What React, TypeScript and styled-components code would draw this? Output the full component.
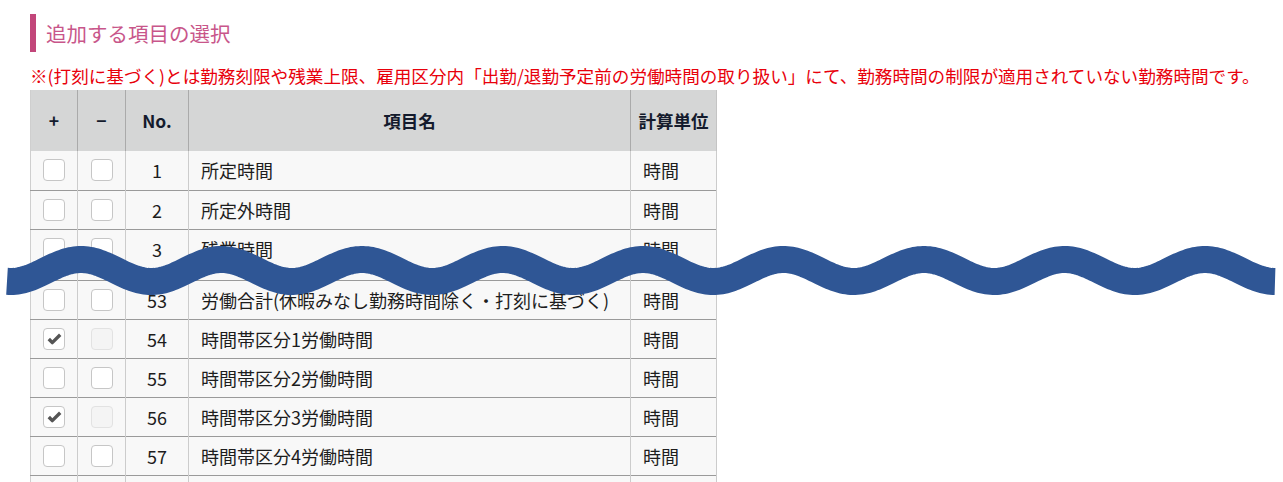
import React from "react";
import styled, { createGlobalStyle } from "styled-components";

const GlobalStyle = createGlobalStyle`
  html, body {
    margin: 0;
    padding: 0;
    background: #ffffff;
  }
  body {
    font-family: "Noto Sans CJK JP", "Noto Sans", sans-serif;
    color: #222;
    overflow: hidden;
  }
`;

const Page = styled.div`
  position: relative;
  padding: 14px 0 0 30px;
`;

const Heading = styled.h2`
  margin: 0;
  height: 38px;
  border-left: 6px solid #c2467a;
  padding-left: 10px;
  font-size: 20.5px;
  line-height: 38px;
  font-weight: 400;
  color: #c8568a;
`;

const Note = styled.p`
  margin: 12px 0 2px;
  font-size: 17.6px;
  line-height: 24px;
  color: #e8000b;
  white-space: nowrap;
`;

const Table = styled.table`
  border-collapse: collapse;
  table-layout: fixed;
  width: 686px;
  border-left: 1px solid #cfcfcf;
`;

const HeadCell = styled.th`
  height: 61px;
  padding: 0;
  background: #d5d6d6;
  border-right: 1px solid #aaaaaa;
  font-size: 17.5px;
  font-weight: 700;
  color: #141b2d;
  text-align: center;
  &:last-child {
    border-right-color: #c4c4c4;
  }
`;

const Row = styled.tr<{ $h?: number }>`
  height: ${(p) => p.$h ?? 39}px;
  border-bottom: 1px solid #9a9a9a;
`;

const Cell = styled.td<{ $align?: "left" | "center" }>`
  padding: 0 ${(p) => (p.$align === "left" ? "12px" : "0")};
  background: #f8f8f8;
  border-right: 1px solid #cccccc;
  font-size: 18px;
  text-align: ${(p) => p.$align ?? "center"};
  vertical-align: middle;
  color: #1d1d1d;
  white-space: nowrap;
  overflow: hidden;
`;

const BoxCell = styled(Cell)`
  & > span {
    margin: 0 auto;
  }
`;

const Box = styled.span<{ $disabled?: boolean }>`
  display: flex;
  align-items: center;
  justify-content: center;
  width: 20px;
  height: 20px;
  border: 1px solid ${(p) => (p.$disabled ? "#e2e2e2" : "#c6c6c6")};
  border-radius: 4px;
  background: ${(p) => (p.$disabled ? "#f4f4f4" : "#ffffff")};
`;

const Wave = styled.svg`
  position: absolute;
  left: 0;
  top: 230px;
  pointer-events: none;
`;

type Item = {
  no: number;
  name: string;
  add?: boolean;
};

const top: Item[] = [
  { no: 1, name: "所定時間" },
  { no: 2, name: "所定外時間" },
  { no: 3, name: "残業時間" },
];

const bottom: Item[] = [
  { no: 53, name: "労働合計(休暇みなし勤務時間除く・打刻に基づく)" },
  { no: 54, name: "時間帯区分1労働時間", add: true },
  { no: 55, name: "時間帯区分2労働時間" },
  { no: 56, name: "時間帯区分3労働時間", add: true },
  { no: 57, name: "時間帯区分4労働時間" },
];

const Check = () => (
  <svg width="15" height="12" viewBox="0 0 15 12">
    <polyline
      points="1.8,6 5.3,9.6 13.2,1.8"
      fill="none"
      stroke="#555555"
      strokeWidth="3.4"
      strokeLinejoin="round"
    />
  </svg>
);

const ItemRow = ({ item }: { item: Item }) => (
  <Row>
    <BoxCell>
      <Box>{item.add && <Check />}</Box>
    </BoxCell>
    <BoxCell>
      <Box $disabled={item.add} />
    </BoxCell>
    <Cell>{item.no}</Cell>
    <Cell $align="left">{item.name}</Cell>
    <Cell $align="left">時間</Cell>
  </Row>
);

const BlankRow = ({ h }: { h: number }) => (
  <Row $h={h}>
    <Cell />
    <Cell />
    <Cell />
    <Cell />
    <Cell />
  </Row>
);

// wavy "omitted rows" marker drawn across the table
const wavePath = () => {
  const pts: string[] = [];
  for (let x = 7; x <= 1276; x += 2) {
    const y = 40.5 - 11 * Math.cos((2 * Math.PI * (x - 81)) / 140.5);
    pts.push(`${pts.length ? "L" : "M"}${x},${y.toFixed(2)}`);
  }
  return pts.join(" ");
};

export default function App() {
  return (
    <>
      <GlobalStyle />
      <Page>
        <Heading>追加する項目の選択</Heading>
        <Note>
          ※(打刻に基づく)とは勤務刻限や残業上限、雇用区分内「出勤/退勤予定前の労働時間の取り扱い」にて、勤務時間の制限が適用されていない勤務時間です。
        </Note>
        <Table>
          <colgroup>
            <col style={{ width: 47 }} />
            <col style={{ width: 48 }} />
            <col style={{ width: 63 }} />
            <col style={{ width: 442 }} />
            <col style={{ width: 86 }} />
          </colgroup>
          <thead>
            <tr>
              <HeadCell>+</HeadCell>
              <HeadCell>−</HeadCell>
              <HeadCell>No.</HeadCell>
              <HeadCell>項目名</HeadCell>
              <HeadCell>計算単位</HeadCell>
            </tr>
          </thead>
          <tbody>
            {top.map((it) => (
              <ItemRow key={it.no} item={it} />
            ))}
            <BlankRow h={12} />
            {bottom.map((it) => (
              <ItemRow key={it.no} item={it} />
            ))}
            <BlankRow h={20} />
          </tbody>
        </Table>
        <Wave width="1283" height="80" viewBox="0 0 1283 80">
          <path
            d={wavePath()}
            fill="none"
            stroke="#2f5695"
            strokeWidth="27"
            strokeLinecap="butt"
          />
        </Wave>
      </Page>
    </>
  );
}
